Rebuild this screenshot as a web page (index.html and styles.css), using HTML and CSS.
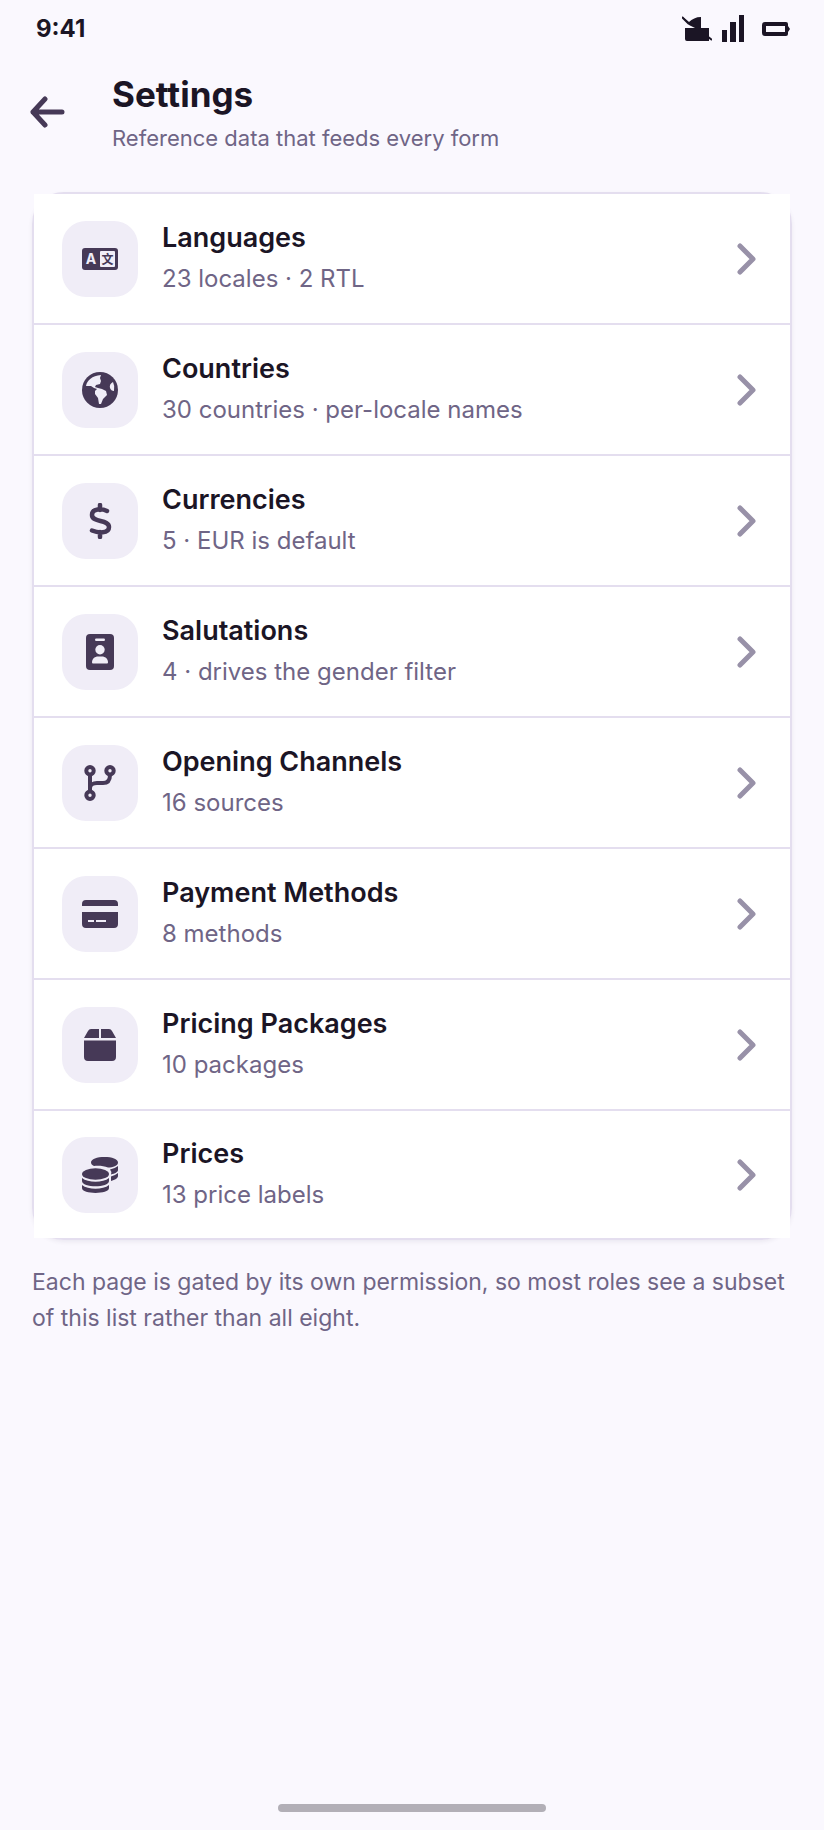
FILE: index.html
```
<!DOCTYPE html>
<html lang="en">
  <head>
    <meta charset="UTF-8" />
    <meta name="viewport" content="width=device-width, initial-scale=1.0" />
    <title>Settings</title>
    <link rel="stylesheet" href="styles.css">
  </head>
  <body>
    <div class="status-bar">
      <span class="time">9:41</span>
      <div class="status-icons">
        <svg width="30" height="28" viewBox="0 0 30 28">
          <path d="M1 3l6 5C10 5 14 3 19 3v11h8v13H5q-2 0-2-2V14h10l-6-3-2-3z" />
          <path d="M0 3l7 7M25 22l5 4" stroke="#1b1525" stroke-width="2" />
        </svg>
        <svg width="22" height="28" viewBox="0 0 22 28">
          <path d="M0 16h5v12H0zM8 8h6v20H8zM17 1h5v27h-5z" />
        </svg>
        <svg width="28" height="28" viewBox="0 0 28 28">
          <path fill-rule="evenodd" d="M3 8h21q2 0 2 2v2l2 3-2 3v2q0 2-2 2H3q-3 0-3-3v-8q0-3 3-3zM4 12v6h19v-6z" />
        </svg>
      </div>
    </div>

    <header class="header">
      <button class="back-btn" type="button" aria-label="Back">
        <svg width="36" height="36" viewBox="0 0 36 36">
          <path d="M15 5L3 18l12 13M3 18h29" />
        </svg>
      </button>
      <div class="header-text">
        <h1>Settings</h1>
        <p>Reference data that feeds every form</p>
      </div>
    </header>

    <main class="content">
      <nav class="settings-list">
        <a class="row" href="#languages">
          <span class="tile">
            <svg class="icon" viewBox="0 0 36 36">
              <rect y="7" width="36" height="22" rx="3" />
              <rect class="cut" x="18" y="10" width="15" height="16" rx="1" />
              <text class="cut latin" x="9" y="23" text-anchor="middle">A</text>
              <text class="han" x="25.500" y="22.500" text-anchor="middle">文</text>
            </svg>
          </span>
          <span class="row-text">
            <span class="row-title">Languages</span>
            <span class="row-sub">23 locales · 2 RTL</span>
          </span>
          <svg class="chevron" viewBox="0 0 20 34"><path d="M4 4l13 13L4 30" /></svg>
        </a>
        <a class="row" href="#countries">
          <span class="tile">
            <svg class="icon" viewBox="0 0 36 36">
              <circle cx="18" cy="18" r="18" />
              <path class="cut" d="M4 14C5 8 10 4 19 3l-1 3 1 3-1 3-4 1-1 2 3 1 4 1 4 2 1 4-4 4-2 5h-2l-1-6-3-4v-3l2-2-3-1-3-2z" />
              <path class="cut" d="M31 10q-4 2-3 6 1 3 4 3 1-5-1-9z" />
            </svg>
          </span>
          <span class="row-text">
            <span class="row-title">Countries</span>
            <span class="row-sub">30 countries · per-locale names</span>
          </span>
          <svg class="chevron" viewBox="0 0 20 34"><path d="M4 4l13 13L4 30" /></svg>
        </a>
        <a class="row" href="#currencies">
          <span class="tile">
            <svg class="icon line" viewBox="0 0 36 36">
              <path d="M18 2v5M18 29v5M25 8C20 5.500 10 5 10 12c0 8 17 4 17 12 0 7-11 6-17 3.500" stroke-width="4.500" />
            </svg>
          </span>
          <span class="row-text">
            <span class="row-title">Currencies</span>
            <span class="row-sub">5 · EUR is default</span>
          </span>
          <svg class="chevron" viewBox="0 0 20 34"><path d="M4 4l13 13L4 30" /></svg>
        </a>
        <a class="row" href="#salutations">
          <span class="tile">
            <svg class="icon" viewBox="0 0 36 36">
              <rect x="4" width="28" height="36" rx="4" />
              <rect class="cut" x="13" y="4.500" width="10" height="2.500" rx="1.200" />
              <circle class="cut" cx="18" cy="15.800" r="4.700" />
              <path class="cut" d="M10 28.500c0-4 3-6 6-6h4c3 0 6 2 6 6q0 1-1 1H11q-1 0-1-1z" />
            </svg>
          </span>
          <span class="row-text">
            <span class="row-title">Salutations</span>
            <span class="row-sub">4 · drives the gender filter</span>
          </span>
          <svg class="chevron" viewBox="0 0 20 34"><path d="M4 4l13 13L4 30" /></svg>
        </a>
        <a class="row" href="#channels">
          <span class="tile">
            <svg class="icon line" viewBox="0 0 36 36">
              <circle cx="8" cy="5.700" r="3.700" />
              <circle cx="28" cy="5.700" r="3.700" />
              <circle cx="8" cy="30.300" r="3.700" />
              <path d="M8 10v16M28 10c0 6-3 8-7 8h-6c-4 0-7 2-7 5" />
            </svg>
          </span>
          <span class="row-text">
            <span class="row-title">Opening Channels</span>
            <span class="row-sub">16 sources</span>
          </span>
          <svg class="chevron" viewBox="0 0 20 34"><path d="M4 4l13 13L4 30" /></svg>
        </a>
        <a class="row" href="#payment">
          <span class="tile">
            <svg class="icon" viewBox="0 0 36 36">
              <path d="M0 10V8q0-4 4-4h28q4 0 4 4v2zM0 16h36v12q0 4-4 4H4q-4 0-4-4z" />
              <path class="cut" d="M6 24h6v2H6zM14 24h10v2H14z" />
            </svg>
          </span>
          <span class="row-text">
            <span class="row-title">Payment Methods</span>
            <span class="row-sub">8 methods</span>
          </span>
          <svg class="chevron" viewBox="0 0 20 34"><path d="M4 4l13 13L4 30" /></svg>
        </a>
        <a class="row" href="#packages">
          <span class="tile">
            <svg class="icon" viewBox="0 0 36 36">
              <path d="M2 11l4-7q1-2 3-2h8v9zM19 2h8q2 0 3 2l4 7H19zM2 13.500h32V30q0 4-4 4H6q-4 0-4-4z" />
            </svg>
          </span>
          <span class="row-text">
            <span class="row-title">Pricing Packages</span>
            <span class="row-sub">10 packages</span>
          </span>
          <svg class="chevron" viewBox="0 0 20 34"><path d="M4 4l13 13L4 30" /></svg>
        </a>
        <a class="row" href="#prices">
          <span class="tile">
            <svg class="icon" viewBox="0 0 36 36">
              <path d="M9 5.500C9 2 15 0 22.500 0S36 2 36 5.500 31 10.500 26 10.500c-4-1.500-9-2-14-1.500-2-1-3-2-3-3.500z" />
              <path d="M28 12.500q5-1 8-3.500v4c0 2-3 3.500-7 4.500q1-3-1-5zM29 19.500q4-1 7-3.500v3c0 2-3 4-7 5z" />
              <ellipse cx="13.500" cy="17" rx="13.500" ry="5.800" />
              <path d="M0 21c6 5 21 5 27 0v3c0 7-27 7-27 0zM0 28c6 5 21 5 27 0v3c0 6.500-27 6.500-27 0z" />
            </svg>
          </span>
          <span class="row-text">
            <span class="row-title">Prices</span>
            <span class="row-sub">13 price labels</span>
          </span>
          <svg class="chevron" viewBox="0 0 20 34"><path d="M4 4l13 13L4 30" /></svg>
        </a>
      </nav>
      <p class="note">Each page is gated by its own permission, so most roles see a subset of this list rather than all eight.</p>
    </main>

    <div class="home-bar"></div>
  </body>
</html>
```
FILE: styles.css
```
* {
  margin: 0;
  padding: 0;
  box-sizing: border-box;
}

body {
  display: flex;
  flex-direction: column;
  min-height: 100vh;
  background: #faf8fe;
  color: #1b1525;
  font-family: Inter, "Liberation Sans", sans-serif;
}

/* Status bar */
.status-bar {
  display: flex;
  justify-content: space-between;
  align-items: center;
  height: 56px;
  padding: 0 34px 0 36px;
}

.time {
  font-size: 24px;
  font-weight: 700;
}

.status-icons {
  display: flex;
  gap: 10px;
  fill: #1b1525;
}

.status-icons svg:last-child {
  margin-left: 8px;
}

/* Header */
.header {
  display: flex;
  align-items: flex-start;
  gap: 34px;
  padding: 16px 32px 0 18px;
}

.back-btn {
  display: flex;
  align-items: center;
  justify-content: center;
  width: 60px;
  height: 80px;
  border: none;
  background: none;
  cursor: pointer;
}

.back-btn path {
  fill: none;
  stroke: #463957;
  stroke-width: 5;
  stroke-linecap: round;
  stroke-linejoin: round;
}

h1 {
  font-size: 35px;
  line-height: 44px;
  font-weight: 700;
}

.header p {
  font-size: 22px;
  line-height: 36px;
  margin-top: 4px;
  color: #6f6586;
}

/* Settings list */
.content {
  flex: 1;
  padding: 36px 32px 0;
}

.settings-list {
  border: 2px solid #e4deef;
  border-radius: 32px;
  box-shadow: 0 2px 4px rgba(70, 57, 87, 0.08);
}

.row {
  display: flex;
  align-items: center;
  gap: 24px;
  min-height: 131px;
  padding: 20px 34px 20px 28px;
  background: #fff;
  border-bottom: 2px solid #e4deef;
  color: #1b1525;
  text-decoration: none;
}

.row:last-child {
  min-height: 127px;
  border-bottom: none;
}

.tile {
  display: flex;
  align-items: center;
  justify-content: center;
  width: 76px;
  height: 76px;
  border-radius: 24px;
  background: #f0edf7;
}

.icon {
  width: 36px;
  height: 36px;
  fill: #463957;
}

.icon.line {
  fill: none;
  stroke: #463957;
  stroke-width: 4;
  stroke-linecap: round;
}

.icon .cut {
  fill: #f0edf7;
}

.latin {
  font-size: 14px;
  font-weight: 700;
}

.han {
  font-family: "Noto Sans CJK SC", sans-serif;
  font-size: 12px;
  font-weight: 700;
}

.row-text {
  flex: 1;
  display: flex;
  flex-direction: column;
}

.row-title {
  font-size: 27px;
  line-height: 40px;
  font-weight: 600;
}

.row-sub {
  font-size: 24px;
  line-height: 42px;
  color: #6f6586;
}

.chevron {
  width: 20px;
  height: 34px;
  fill: none;
  stroke: #9891a8;
  stroke-width: 5;
  stroke-linecap: round;
  stroke-linejoin: round;
}

.note {
  margin-top: 24px;
  font-size: 23px;
  line-height: 36px;
  color: #6f6586;
}

/* Home indicator */
.home-bar {
  width: 268px;
  height: 8px;
  margin: 0 auto 18px;
  border-radius: 4px;
  background: #b2afb7;
}
```
